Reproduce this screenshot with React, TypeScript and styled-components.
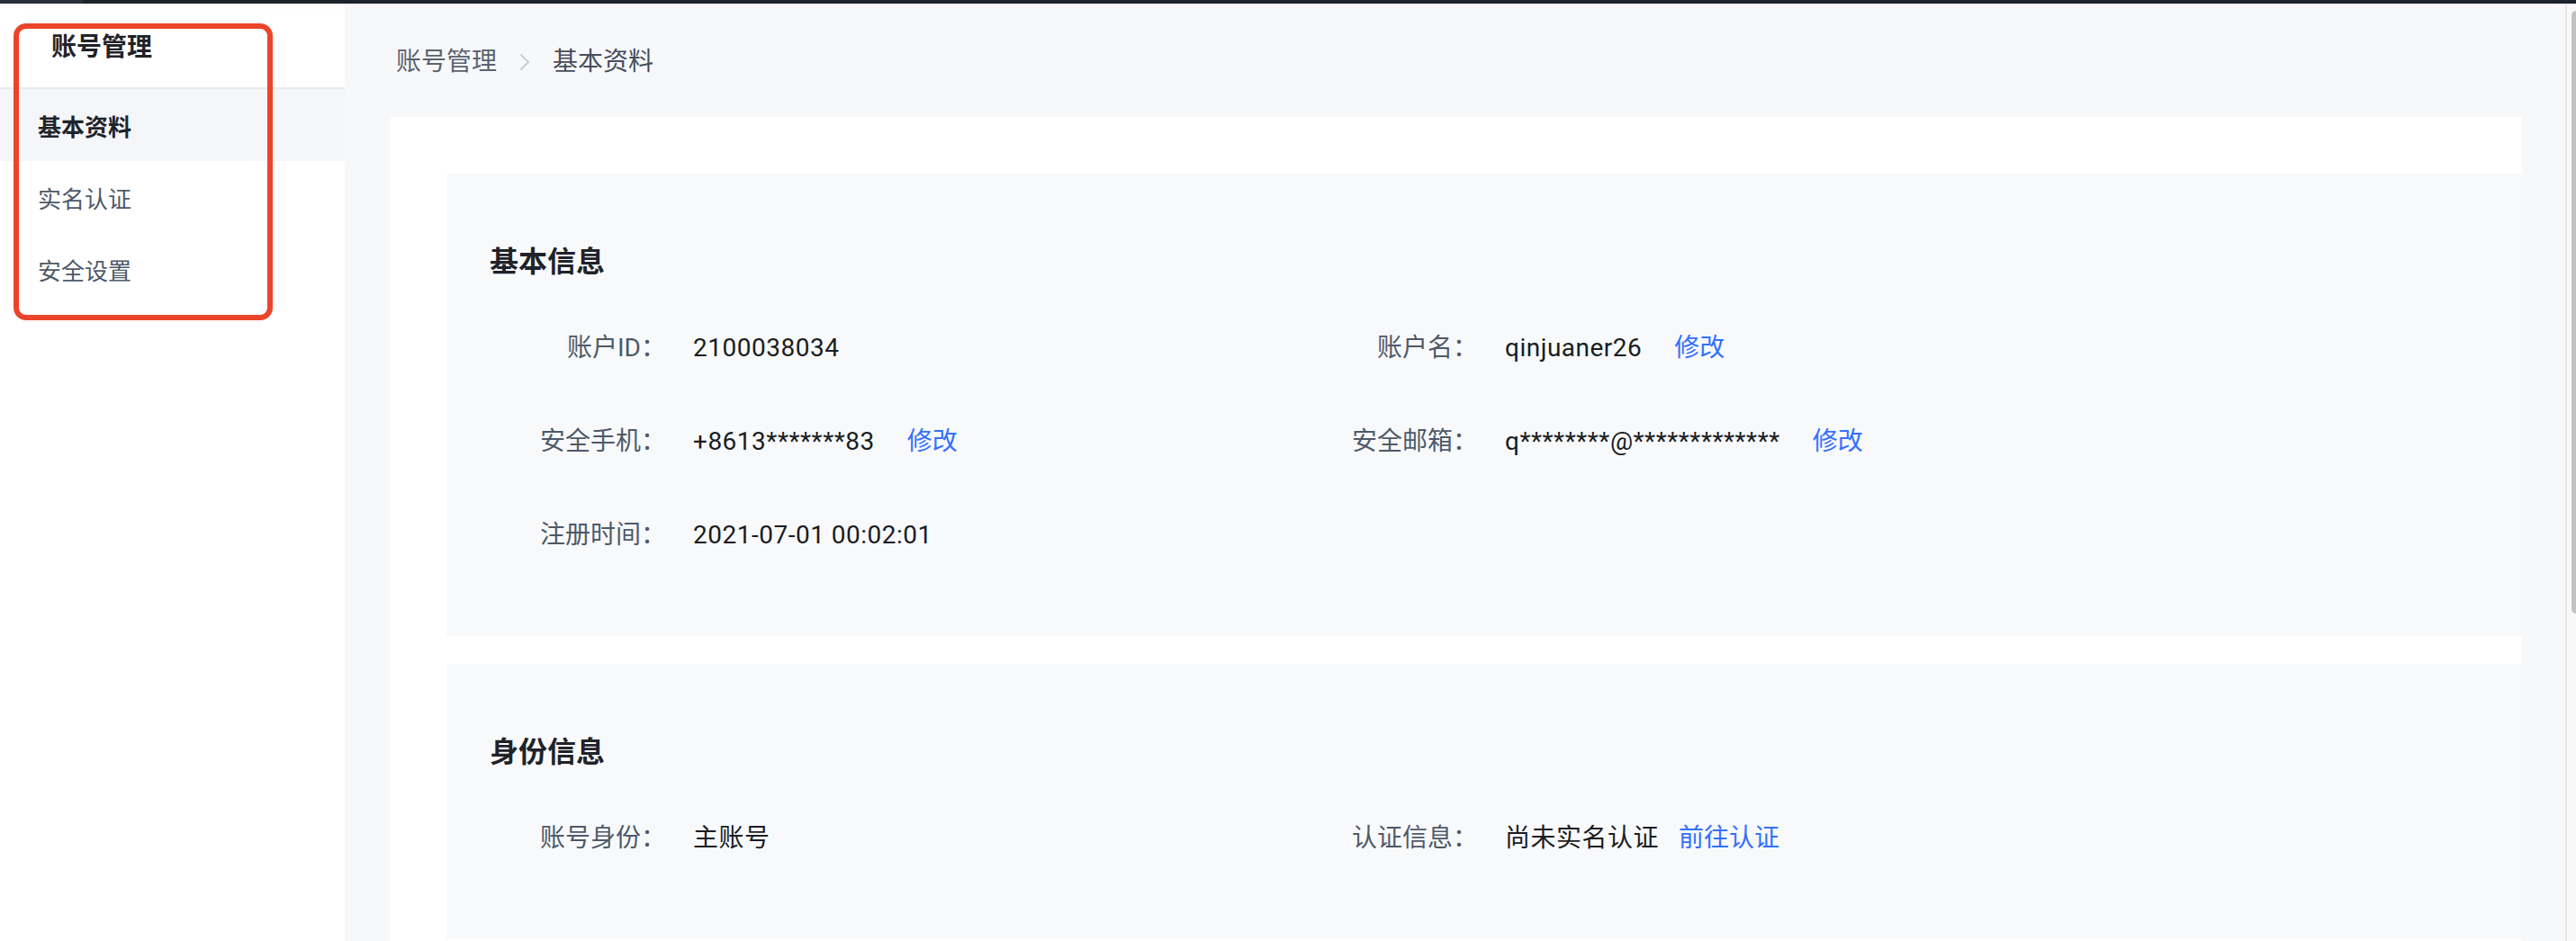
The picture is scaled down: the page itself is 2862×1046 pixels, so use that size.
import styled, { createGlobalStyle } from "styled-components";

const GlobalStyle = createGlobalStyle`
  * { box-sizing: border-box; }
  html, body {
    margin: 0;
    padding: 0;
    background: #f7f8fa;
    font-family: Roboto, "Noto Sans CJK SC", sans-serif;
  }
`;

const Page = styled.div`
  display: flex;
  flex-direction: column;
  width: 2862px;
  height: 1046px;
  overflow: hidden;
`;

const TopBar = styled.div`
  position: relative;
  z-index: 2;
  display: flex;
  height: 4px;
  flex-shrink: 0;
  background: #1e222b;
  box-shadow: 0 4px 28px rgba(0, 0, 0, 0.035);
`;

const TopAccent = styled.div`
  width: 92px;
  background: #2b303b;
`;

const Body = styled.div`
  display: flex;
  flex: 1;
  min-height: 0;
`;

const Sidebar = styled.aside`
  position: relative;
  width: 383px;
  flex-shrink: 0;
  background: #fff;
`;

const SideTitle = styled.div`
  height: 95px;
  padding: 29px 0 0 57px;
  line-height: 40px;
  font-size: 28px;
  font-weight: 600;
  color: #1f2329;
  border-bottom: 2px solid #e8eaed;
`;

const MenuItem = styled.div<{ $active?: boolean }>`
  display: flex;
  align-items: center;
  height: 80px;
  padding-left: 42px;
  font-size: 26px;
  font-weight: ${(p) => (p.$active ? 600 : 400)};
  color: ${(p) => (p.$active ? "#1f2329" : "#4e5969")};
  background: ${(p) => (p.$active ? "#f5f6f9" : "transparent")};
`;

const Highlight = styled.div`
  position: absolute;
  left: 15px;
  top: 22px;
  width: 288px;
  height: 330px;
  border: 6px solid #ec4429;
  border-radius: 14px;
  pointer-events: none;
`;

const Main = styled.main`
  flex: 1;
  min-width: 0;
  display: flex;
  flex-direction: column;
  padding-left: 51px;
  background: #f7f8fa;
  overflow: hidden;
`;

const Breadcrumb = styled.nav`
  display: flex;
  align-items: flex-start;
  gap: 25px;
  height: 126px;
  flex-shrink: 0;
  padding: 45px 0 0 6px;
  line-height: 40px;
  font-size: 28px;
`;

const Crumb = styled.span<{ $current?: boolean }>`
  color: ${(p) => (p.$current ? "#464e5c" : "#5b6270")};
`;

const Chevron = styled.svg`
  width: 12px;
  height: 20px;
  margin-top: 10px;
`;

const Card = styled.div`
  flex: 1 0 auto;
  margin-right: 48px;
  padding: 63px 0 40px 62px;
  background: #fff;
  display: flex;
  flex-direction: column;
  gap: 31px;
`;

const Section = styled.section<{ $bottom: number }>`
  flex-shrink: 0;
  background: #f8f9fb;
  padding: 76px 0 ${(p) => p.$bottom}px 48px;
`;

const SectionTitle = styled.h2`
  margin: 0;
  font-size: 32px;
  line-height: 44px;
  font-weight: 600;
  color: #1f2329;
`;

const Fields = styled.div`
  display: grid;
  grid-template-columns: 902px 1fr;
  row-gap: 60px;
  margin-top: 52px;
`;

const Field = styled.div`
  display: flex;
  align-items: center;
  height: 44px;
  font-size: 28px;
  line-height: 44px;
`;

const Label = styled.span`
  width: 196px;
  flex-shrink: 0;
  text-align: right;
  color: #4e5969;
`;

const Value = styled.span`
  margin-left: 30px;
  color: #1a1d23;
  letter-spacing: 0.5px;
  white-space: nowrap;
`;

const Link = styled.a<{ $gap?: number }>`
  margin-left: ${(p) => p.$gap ?? 36}px;
  color: #3370ff;
  text-decoration: none;
  cursor: pointer;
  white-space: nowrap;
`;

const Scrollbar = styled.div`
  width: 12px;
  flex-shrink: 0;
  background: #f8f8f8;
  border-left: 2px solid #e6e6e6;
  padding: 8px 0 0 5px;
`;

const Thumb = styled.div`
  height: 670px;
  background: #c2c2c2;
  border-radius: 6px 0 0 6px;
`;

interface Row {
  label: string;
  value: string;
  link?: string;
  gap?: number;
}

const basicInfo: (Row | null)[] = [
  { label: "账户ID：", value: "2100038034" },
  { label: "账户名：", value: "qinjuaner26", link: "修改" },
  { label: "安全手机：", value: "+8613*******83", link: "修改" },
  { label: "安全邮箱：", value: "q********@*************", link: "修改" },
  { label: "注册时间：", value: "2021-07-01 00:02:01" },
  null,
];

const identityInfo: Row[] = [
  { label: "账号身份：", value: "主账号" },
  { label: "认证信息：", value: "尚未实名认证", link: "前往认证", gap: 22 },
];

const menu = ["基本资料", "实名认证", "安全设置"];

const FieldList = ({ rows }: { rows: (Row | null)[] }) => (
  <Fields>
    {rows.map((r, i) =>
      r ? (
        <Field key={i}>
          <Label>{r.label}</Label>
          <Value>{r.value}</Value>
          {r.link && <Link $gap={r.gap}>{r.link}</Link>}
        </Field>
      ) : (
        <div key={i} />
      )
    )}
  </Fields>
);

export default function App() {
  return (
    <Page>
      <GlobalStyle />
      <TopBar>
        <TopAccent />
      </TopBar>
      <Body>
        <Sidebar>
          <SideTitle>账号管理</SideTitle>
          {menu.map((m, i) => (
            <MenuItem key={m} $active={i === 0}>
              {m}
            </MenuItem>
          ))}
          <Highlight />
        </Sidebar>
        <Main>
          <Breadcrumb>
            <Crumb>账号管理</Crumb>
            <Chevron viewBox="0 0 12 20">
              <polyline points="1.5,1.5 10,10 1.5,18.5" fill="none" stroke="#c9cdd4" strokeWidth="2" />
            </Chevron>
            <Crumb $current>基本资料</Crumb>
          </Breadcrumb>
          <Card>
            <Section $bottom={90}>
              <SectionTitle>基本信息</SectionTitle>
              <FieldList rows={basicInfo} />
            </Section>
            <Section $bottom={90}>
              <SectionTitle>身份信息</SectionTitle>
              <FieldList rows={identityInfo} />
            </Section>
          </Card>
        </Main>
        <Scrollbar>
          <Thumb />
        </Scrollbar>
      </Body>
    </Page>
  );
}
